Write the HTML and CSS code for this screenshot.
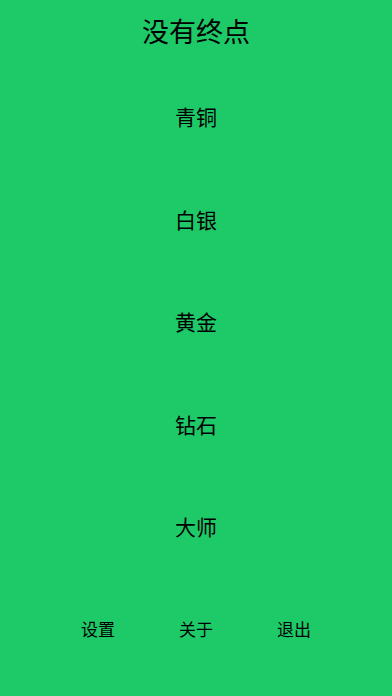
FILE: index.html
```html
<!DOCTYPE html>
<html lang="zh-CN">
<head>
<meta charset="utf-8">
<meta name="viewport" content="width=device-width, initial-scale=1">
<link rel="stylesheet" href="styles.css">
<title>没有终点</title>
</head>
<body>
<div class="screen">
  <h1 class="title">没有终点</h1>
  <ul class="levels">
    <li class="level">青铜</li>
    <li class="level">白银</li>
    <li class="level">黄金</li>
    <li class="level">钻石</li>
    <li class="level">大师</li>
  </ul>
  <nav class="footer">
    <span class="footer-item">设置</span>
    <span class="footer-item">关于</span>
    <span class="footer-item">退出</span>
  </nav>
</div>
</body>
</html>
```

FILE: styles.css
```css
html, body {
  margin: 0;
  padding: 0;
  background: #1ec968;
}
.screen {
  width: 392px;
  height: 696px;
  display: flex;
  flex-direction: column;
  font-family: "Noto Sans CJK SC", "Noto Sans", sans-serif;
  color: #000;
}
.title {
  margin: 13px 0 0;
  font-size: 27px;
  font-weight: 400;
  line-height: 36px;
  text-align: center;
}
.levels {
  list-style: none;
  margin: 16px 0 0;
  padding: 0;
  display: flex;
  flex-direction: column;
}
.level {
  height: 102.5px;
  display: flex;
  align-items: center;
  justify-content: center;
  font-size: 21px;
}
.footer {
  margin-top: 39px;
  padding: 0 49px;
  display: grid;
  grid-template-columns: 1fr 1fr 1fr;
  line-height: 24px;
  font-size: 17px;
}
.footer-item {
  text-align: center;
}
```
